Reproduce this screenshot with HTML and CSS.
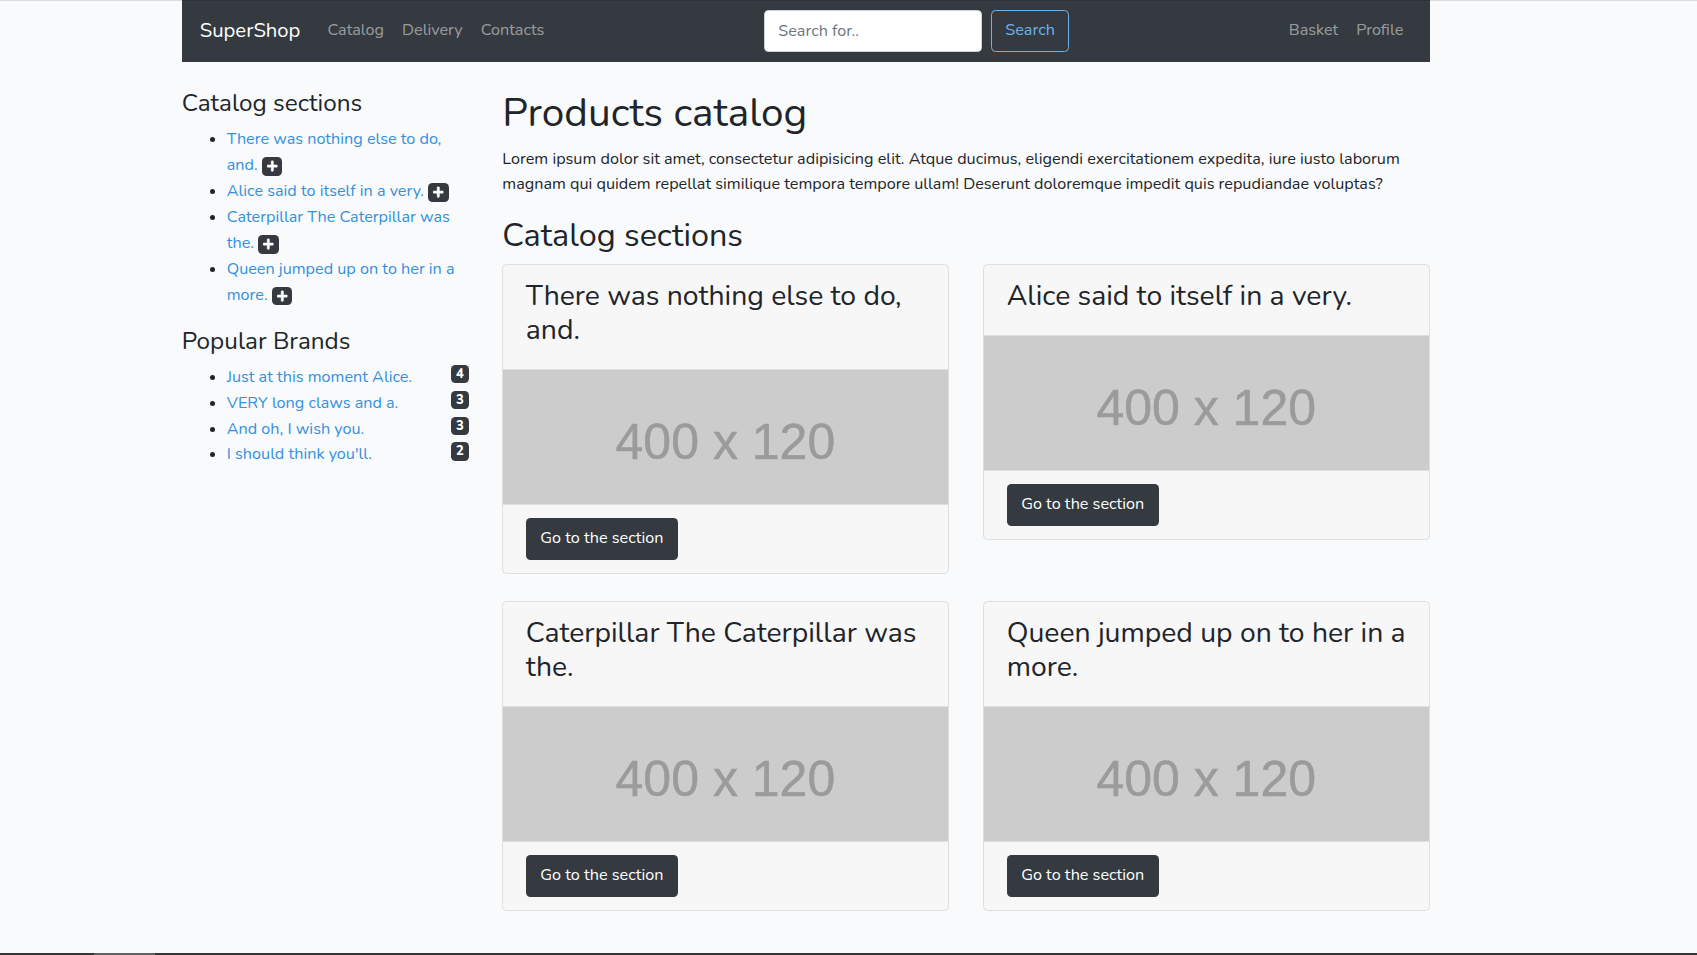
FILE: index.html
```
<!DOCTYPE html>
<html lang="en">
<head>
<meta charset="utf-8">
<title>SuperShop</title>
<link rel="stylesheet" href="styles.css">
</head>
<body>
<svg class="sprite" aria-hidden="true">
  <symbol id="plus" viewBox="0 0 448 512"><path fill="currentColor" d="M416 208H272V64c0-17.67-14.33-32-32-32h-32c-17.67 0-32 14.33-32 32v144H32c-17.67 0-32 14.33-32 32v32c0 17.67 14.33 32 32 32h144v144c0 17.67 14.33 32 32 32h32c17.67 0 32-14.33 32-32V304h144c17.67 0 32-14.33 32-32v-32c0-17.67-14.33-32-32-32z"/></symbol>
</svg>
<div class="container">
  <nav class="navbar">
    <a class="brand" href="#">SuperShop</a>
    <ul class="nav-list">
      <li><a class="nav-link" href="#">Catalog</a></li>
      <li><a class="nav-link" href="#">Delivery</a></li>
      <li><a class="nav-link" href="#">Contacts</a></li>
    </ul>
    <form class="search-form">
      <input class="search-input" type="search" placeholder="Search for.." aria-label="Search">
      <button class="btn btn-outline" type="button">Search</button>
    </form>
    <ul class="nav-list">
      <li><a class="nav-link" href="#">Basket</a></li>
      <li><a class="nav-link" href="#">Profile</a></li>
    </ul>
  </nav>
  <div class="layout">
    <aside class="sidebar">
      <h4>Catalog sections</h4>
      <ul class="side-list">
        <li><a href="#">There was nothing else to do, and.</a> <span class="badge"><svg class="plus"><use href="#plus"/></svg></span></li>
        <li><a href="#">Alice said to itself in a very.</a> <span class="badge"><svg class="plus"><use href="#plus"/></svg></span></li>
        <li><a href="#">Caterpillar The Caterpillar was the.</a> <span class="badge"><svg class="plus"><use href="#plus"/></svg></span></li>
        <li><a href="#">Queen jumped up on to her in a more.</a> <span class="badge"><svg class="plus"><use href="#plus"/></svg></span></li>
      </ul>
      <h4>Popular Brands</h4>
      <ul class="side-list">
        <li><a href="#">Just at this moment Alice.</a><span class="badge count">4</span></li>
        <li><a href="#">VERY long claws and a.</a><span class="badge count">3</span></li>
        <li><a href="#">And oh, I wish you.</a><span class="badge count">3</span></li>
        <li><a href="#">I should think you'll.</a><span class="badge count">2</span></li>
      </ul>
    </aside>
    <main class="content">
      <h1>Products catalog</h1>
      <p>Lorem ipsum dolor sit amet, consectetur adipisicing elit. Atque ducimus, eligendi exercitationem expedita, iure iusto laborum magnam qui quidem repellat similique tempora tempore ullam! Deserunt doloremque impedit quis repudiandae voluptas?</p>
      <h2>Catalog sections</h2>
      <div class="cards">
        <article class="card">
          <header class="card-header"><h3>There was nothing else to do, and.</h3></header>
          <div class="card-image">400 x 120</div>
          <footer class="card-footer"><a class="btn btn-dark" href="#">Go to the section</a></footer>
        </article>
        <article class="card">
          <header class="card-header"><h3>Alice said to itself in a very.</h3></header>
          <div class="card-image">400 x 120</div>
          <footer class="card-footer"><a class="btn btn-dark" href="#">Go to the section</a></footer>
        </article>
        <article class="card">
          <header class="card-header"><h3>Caterpillar The Caterpillar was the.</h3></header>
          <div class="card-image">400 x 120</div>
          <footer class="card-footer"><a class="btn btn-dark" href="#">Go to the section</a></footer>
        </article>
        <article class="card">
          <header class="card-header"><h3>Queen jumped up on to her in a more.</h3></header>
          <div class="card-image">400 x 120</div>
          <footer class="card-footer"><a class="btn btn-dark" href="#">Go to the section</a></footer>
        </article>
      </div>
    </main>
  </div>
</div>
<div class="top-edge"></div>
<div class="taskbar"><div class="taskbar-item"></div></div>
</body>
</html>
```
FILE: styles.css
```
*, *::before, *::after { box-sizing: border-box; }
html { font-size: 18px; }
body {
  margin: 0;
  height: 955px;
  overflow: hidden;
  position: relative;
  background: #f8fafc;
  color: #212529;
  font-family: Nunito, Lato, sans-serif;
  font-size: 0.9rem;
  line-height: 1.6;
}
h1, h2, h3, h4 { margin: 0 0 0.5rem; font-weight: 400; line-height: 1.2; }
h1 { font-size: 2.25rem; }
h2 { font-size: 1.8rem; }
h3 { font-size: 1.575rem; }
h4 { font-size: 1.35rem; }
p { margin: 0 0 1rem; }
a { color: #3490dc; text-decoration: none; }
.sprite { display: none; }

.container { width: 1248.5px; margin-left: 181.75px; }

.navbar {
  display: flex;
  align-items: center;
  padding: 0.5rem 1rem;
  margin-bottom: 1.5rem;
  background: #343a40;
}
.brand { margin-right: 1rem; color: #fff; font-size: 1.125rem; }
.nav-list { display: flex; margin: 0; padding: 0; list-style: none; }
.nav-link { display: block; padding: 0.5rem; color: rgba(255, 255, 255, 0.5); }
.search-form { display: flex; gap: 0.5rem; margin: 0 auto; }
.search-input {
  width: 218px;
  height: 41.7px;
  padding: 0.375rem 0.75rem;
  border: 1px solid #ced4da;
  border-radius: 0.25rem;
  background: #fff;
  font: inherit;
  appearance: none;
}
.search-input::placeholder { color: #6c757d; opacity: 1; }

.btn {
  display: inline-block;
  padding: 0.375rem 0.75rem;
  border: 1px solid transparent;
  border-radius: 0.25rem;
  font: inherit;
  vertical-align: middle;
}
.btn-outline { height: 41.7px; background: transparent; border-color: #6cb2eb; color: #6cb2eb; }
.btn-dark { padding-top: 7.25px; background: #343a40; color: #fff; }

.layout { display: grid; grid-template-columns: 287.1px 1fr; column-gap: 33.5px; }
.side-list { margin: 0 0 1rem; padding-left: 45px; }
.badge {
  display: inline-block;
  padding: 0.25em 0.4em;
  border-radius: 0.25rem;
  background: #343a40;
  color: #fff;
  font-size: 75%;
  font-weight: 700;
  line-height: 1;
  vertical-align: -0.7px;
}
.plus { display: inline-block; width: 0.875em; height: 1em; vertical-align: -0.125em; stroke: currentColor; stroke-width: 20px; overflow: visible; }
.count { float: right; font-weight: 800; font-size: 13px; padding: 3px 5px 2.5px; }

.cards {
  display: grid;
  grid-template-columns: 1fr 1fr;
  gap: 1.5rem 33.75px;
  align-items: start;
}
.card {
  border: 1px solid #dfdfdf;
  border-radius: 0.25rem;
  background: #f7f7f7;
  overflow: hidden;
}
.card-header { padding: 0.75rem 1.25rem 13px; border-bottom: 1px solid #dfdfdf; }
.card-image {
  display: flex;
  align-items: center;
  justify-content: center;
  height: 134px;
  padding: 10px 1px 0 0;
  background: #ccc;
  color: #9b9b9b;
  font: 50px/1 "Liberation Sans", Arial, sans-serif;
  -webkit-text-stroke: 0.5px #9b9b9b;
}
.card-footer { padding: 13px 1.25rem 0.75rem; border-top: 1px solid #dfdfdf; }

.top-edge { position: absolute; top: 0; left: 0; right: 0; height: 1px; background: rgba(0, 0, 0, 0.12); }
.taskbar { position: absolute; bottom: 0; left: 0; right: 0; height: 2px; padding-left: 94px; background: #333; }
.taskbar-item { width: 61px; height: 2px; background: #606060; }
```
